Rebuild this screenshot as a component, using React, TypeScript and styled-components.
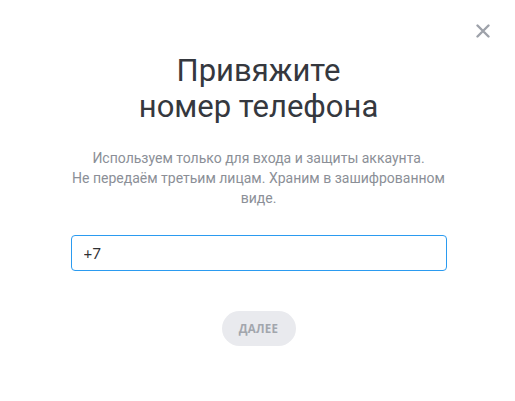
import styled, { createGlobalStyle } from "styled-components";

const GlobalStyle = createGlobalStyle`
  html, body {
    margin: 0;
    padding: 0;
    background: #ffffff;
  }
  * {
    box-sizing: border-box;
  }
`;

const Modal = styled.div`
  position: relative;
  width: 515px;
  height: 401px;
  background: #ffffff;
  font-family: Roboto, "Noto Sans", Arial, sans-serif;

  display: flex;
  flex-direction: column;
  align-items: center;
  padding: 53px 0 0 2px;
`;

const CloseButton = styled.button`
  position: absolute;
  top: 22px;
  right: 23px;
  width: 18px;
  height: 18px;
  padding: 0;
  border: none;
  background: transparent;
  cursor: pointer;

  display: flex;
  align-items: center;
  justify-content: center;
`;

const Title = styled.h1`
  margin: 0;
  font-size: 31px;
  line-height: 36px;
  font-weight: 400;
  color: #35383e;
  text-align: center;
`;

const Description = styled.p`
  width: 392px;
  margin: 23px 0 0;
  font-size: 14px;
  line-height: 20px;
  color: #8b8f97;
  text-align: center;
`;

const PhoneInput = styled.input`
  width: 376px;
  height: 36px;
  margin-top: 27px;
  padding: 0 12px;

  border: 1px solid #2b9bf0;
  border-radius: 4px;
  outline: none;

  font-family: Lato, "Open Sans", Arial, sans-serif;
  font-size: 15px;
  color: #2f3033;
`;

const NextButton = styled.button`
  width: 74px;
  height: 35px;
  margin-top: 40px;
  border: none;
  border-radius: 18px;
  background: #e9eaee;

  font-family: "Open Sans", Roboto, Arial, sans-serif;
  font-size: 11.5px;
  font-weight: 700;
  letter-spacing: 0.3px;
  color: #a2a6ad;
  cursor: default;
`;

function App() {
  return (
    <>
      <GlobalStyle />
      <Modal>
        <CloseButton aria-label="Закрыть">
          <svg width="14" height="14" viewBox="0 0 14 14">
            <path
              d="M1.5 1.5 L12.5 12.5 M12.5 1.5 L1.5 12.5"
              stroke="#9ea2aa"
              strokeWidth="2.4"
              strokeLinecap="round"
            />
          </svg>
        </CloseButton>
        <Title>
          Привяжите
          <br />
          номер телефона
        </Title>
        <Description>
          Используем только для входа и защиты аккаунта.
          <br />
          Не передаём третьим лицам. Храним в зашифрованном виде.
        </Description>
        <PhoneInput defaultValue="+7" />
        <NextButton disabled>ДАЛЕЕ</NextButton>
      </Modal>
    </>
  );
}

export default App;
